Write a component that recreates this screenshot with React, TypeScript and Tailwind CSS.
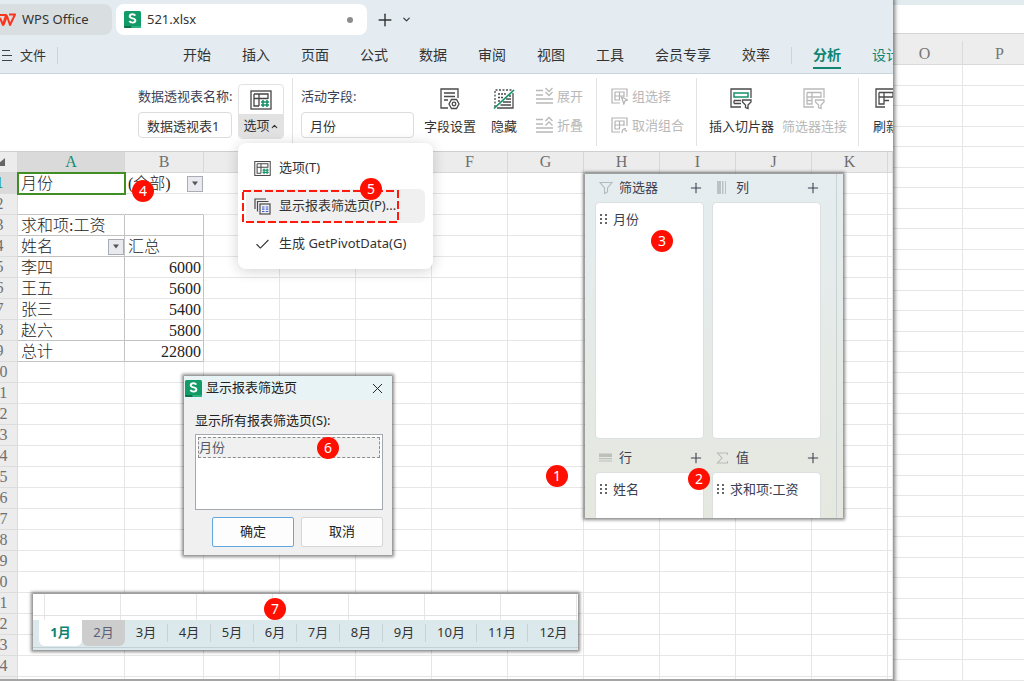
import React from 'react';
import { Plus, ChevronDown, ChevronUp, Check, X } from 'lucide-react';

const MENU_ITEMS = ['开始', '插入', '页面', '公式', '数据', '审阅', '视图', '工具', '会员专享', '效率'];
const COLUMNS = ['A', 'B', 'C', 'D', 'E', 'F', 'G', 'H', 'I', 'J', 'K', 'L'];
const UNLABELLED = ['C', 'D', 'E', 'L'];
const ROWS = Array.from({ length: 25 }, (_, i) => i + 1);
const PIVOT: Record<number, [string, string]> = {
  1: ['月份', '(全部)'],
  3: ['求和项:工资', ''],
  4: ['姓名', '汇总'],
  5: ['李四', '6000'],
  6: ['王五', '5600'],
  7: ['张三', '5400'],
  8: ['赵六', '5800'],
  9: ['总计', '22800'],
};
const MONTHS = Array.from({ length: 12 }, (_, i) => `${i + 1}月`);

function Badge({ n, place }: { n: number; place: string }) {
  return (
    <span className={`absolute z-30 flex size-[22px] items-center justify-center rounded-full bg-[#ff0f00] text-sm text-white ${place}`}>
      {n}
    </span>
  );
}

function WpsMark() {
  return (
    <svg width="16" height="14" viewBox="0 0 16 14" fill="none" stroke="#f9351d" strokeWidth="2" strokeLinejoin="round">
      <path d="M0 2h6l-3 10L0 5" />
      <path d="M3.500 12 7 3l3 9 5-10.500H9" />
    </svg>
  );
}

function SheetMark() {
  return (
    <svg width="17" height="17" viewBox="0 0 17 17" aria-hidden="true">
      <rect width="17" height="17" rx="1.5" fill="#129a67" />
      <path d="M0 15h7.500v2H1.500A1.500 1.500 0 0 1 0 15.500z" fill="#087448" />
      <path d="M7.500 15H17v.5a1.500 1.500 0 0 1-1.500 1.500h-8z" fill="#2fb083" />
      <path d="M11.300 4.700C10.800 3.700 9.900 3.200 8.500 3.200c-1.700 0-2.800.8-2.800 2 0 2.900 5.700 1.400 5.700 4.300 0 1.300-1.200 2.100-2.900 2.100-1.500 0-2.600-.6-3.100-1.700" fill="none" stroke="#fff" strokeWidth="1.900" />
    </svg>
  );
}

function PivotIcon({ size }: { size: number }) {
  return (
    <svg width={size} height={size} viewBox="0 0 22 20" fill="none" stroke="#444" strokeWidth="1.300">
      <rect x="1" y="1" width="20" height="18" />
      <path d="M4 4h14v5M4 4v12h5M4 8.500h14M9 4v12" />
      <path d="M13 10v7M17 10v7M11 12h8M11 15h8" stroke="#159067" strokeWidth="1.500" />
    </svg>
  );
}

function FieldIcon() {
  return (
    <svg width="22" height="24" viewBox="0 0 22 24" fill="none" stroke="#4a4a4a" strokeWidth="1.300">
      <path d="M9 21H2V2h17v9M5 6h11M5 9.500h11M5 13h4" />
      <path d="M12.500 12.500h5l2.500 4.500-2.500 4.500h-5L10 17z" />
      <circle cx="15" cy="17" r="1.800" />
    </svg>
  );
}

function HideIcon() {
  return (
    <svg width="22" height="22" viewBox="0 0 22 22" fill="none" stroke="#4a4a4a" strokeWidth="1.300">
      <path d="M2 19V2h17" strokeDasharray="2 1.500" />
      <path d="M5 6h9M5 9.500h6M5 13h3" strokeDasharray="2 1" />
      <path d="M20 5v15H4M16 8h2M13 11h5M10 14h8M7.500 17H18" />
      <path d="M1 20.500 21 2" stroke="#159067" strokeWidth="1.700" />
    </svg>
  );
}

function ExpandIcon({ up }: { up?: boolean }) {
  return (
    <svg width="18" height="18" viewBox="0 0 18 18" fill="none" stroke="#b9b9b9" strokeWidth="1.300">
      <path d="M1 3.500h7M1 8h7M1 12h17M1 16h17" />
      <path d={up ? 'M10.500 5 14 1.500 17.500 5M10.500 9.500 14 6l3.500 3.500' : 'M10.500 1 14 4.500 17.500 1M10.500 5 14 8.500 17.500 5'} />
    </svg>
  );
}

function GroupIcon({ undo }: { undo?: boolean }) {
  return (
    <svg width="17" height="17" viewBox="0 0 17 17" fill="none" stroke="#b3b3b3" strokeWidth="1.200">
      <path d="M9 15H1V1h15v8M4 4h9v5M4 4v8h5M4 8h9M8.500 4v8" />
      <path d={undo ? 'M11 16c0-3 1-4.500 4-4.500M13.500 12.500l2.500 2' : 'm10.500 9 6 3-2.500 1-1.200 3z'} />
    </svg>
  );
}

function SlicerIcon() {
  return (
    <svg width="23" height="22" viewBox="0 0 23 22" fill="none" stroke="#4a4a4a" strokeWidth="1.300">
      <path d="M11 19H1V1h20v9M4 12.500h7M4 15.500h7M4 12.500v3" />
      <rect x="4" y="5" width="14" height="4" stroke="#159067" strokeWidth="1.500" />
      <path d="M12.500 12h8.500v2l-3 3v3.500l-2.500-1V17l-3-3z" />
    </svg>
  );
}

function FilterLinkIcon() {
  return (
    <svg width="23" height="22" viewBox="0 0 23 22" fill="none" stroke="#b9b9b9" strokeWidth="1.300">
      <path d="M11 19H1V1h20v9M4 4.500h14V9H4M4 4.500V16h5V4.500M4 12.500h5" />
      <path d="M12.500 12h8.500v2l-3 3v3.500l-2.500-1V17l-3-3z" />
    </svg>
  );
}

function RefreshIcon() {
  return (
    <svg width="22" height="22" viewBox="0 0 22 22" fill="none" stroke="#4a4a4a" strokeWidth="1.300">
      <path d="M10 19H1V1h20v9M4 4.500h14V9H4M4 4.500V16h5V4.500M9 12.500h5" />
    </svg>
  );
}

function ReportPagesIcon() {
  return (
    <svg width="17" height="17" viewBox="0 0 17 17" fill="none" stroke="#4a4a4a" strokeWidth="1.200">
      <path d="M1 11V1h11M3.500 13.500v-10h11" />
      <rect x="6" y="6" width="10" height="10" />
      <path d="M8 9h2.500M8 11.200h2.500M8 13.500h2.500M11.800 9h2.500M11.800 11.200h2.500M11.800 13.500h2.500" stroke="#3b5fd0" />
    </svg>
  );
}

function AreaIcon({ kind }: { kind: string }) {
  if (kind === '筛选器')
    return (
      <svg width="14" height="14" viewBox="0 0 14 14" fill="none" stroke="#b5bbbd" strokeWidth="1.100">
        <path d="M1 1.500h12L8.500 7v4L5.500 12.500V7z" />
      </svg>
    );
  if (kind === '列')
    return (
      <svg width="14" height="14" viewBox="0 0 14 14" fill="#bcc1c3">
        <path d="M1 0h4v13H1zM6 0h1.500v13H6zM9 0h1v13H9z" />
      </svg>
    );
  if (kind === '行')
    return (
      <svg width="14" height="14" viewBox="0 0 14 14" fill="#bcbfbc">
        <path d="M0 2.500h13v3.500H0zM0 7h13v1.200H0zM0 9.500h13v1H0z" />
      </svg>
    );
  return (
    <svg width="14" height="14" viewBox="0 0 14 14" fill="none" stroke="#b8bcb8" strokeWidth="1.100">
      <path d="M11.500 4V2H1.500L6 7l-4.500 5h10v-2" />
    </svg>
  );
}

function TallButton({ icon, label, disabled }: { icon: React.ReactNode; label: string; disabled?: boolean }) {
  return (
    <button disabled={disabled} className={`flex shrink-0 flex-col items-center gap-[3px] whitespace-nowrap ${disabled ? 'text-[#b8b8b8]' : 'text-[#333]'}`}>
      <span className="flex h-6 items-center">{icon}</span>
      <span className="leading-6">{label}</span>
    </button>
  );
}

function SmallButton({ icon, label }: { icon: React.ReactNode; label: string }) {
  return (
    <button disabled className="flex items-center gap-1 leading-6 whitespace-nowrap text-[#b8b8b8]">
      {icon}
      {label}
    </button>
  );
}

function Separator() {
  return <div className="h-[68px] w-px shrink-0 bg-[#e3e3e3]" />;
}

function FilterArrow({ label }: { label: string }) {
  return (
    <button aria-label={label} className="flex size-4 shrink-0 items-center justify-center border border-[#a9acb5] bg-[#e9eaf0]">
      <svg width="8" height="5" viewBox="0 0 8 5" fill="#555">
        <path d="M1 .5h6L4 4.500z" />
      </svg>
    </button>
  );
}

function OptionsMenu() {
  return (
    <div className="absolute top-[65px] left-0 z-20 flex w-[195px] flex-col gap-1 rounded-lg bg-white px-2 py-2 text-[#333] shadow-[0_2px_14px_rgba(0,0,0,0.18)]">
      <button className="flex h-[34px] items-center gap-2 px-2">
        <PivotIcon size={17} />
        选项(T)
      </button>
      <button className="relative flex h-[34px] items-center gap-2 rounded-md bg-[#f0f0f0] px-2 whitespace-nowrap">
        <ReportPagesIcon />
        显示报表筛选页(P)...
        <svg className="absolute top-0 -left-1" width="158" height="34" fill="none" stroke="#ff1a0e" strokeWidth="2" strokeDasharray="8 3">
          <rect x="1" y="2" width="155" height="31" />
        </svg>
      </button>
      <button className="flex h-[34px] items-center gap-2 px-2 whitespace-nowrap">
        <Check size={17} strokeWidth={1.5} />
        生成 GetPivotData(G)
      </button>
      <Badge n={5} place="top-[35px] left-[122px]" />
    </div>
  );
}

function Ribbon() {
  return (
    <div className="relative z-20 flex h-[78px] shrink-0 items-start border-b border-[#cfcfcf] bg-white pt-1 pl-[138px]">
      <div className="flex w-[94px] shrink-0 flex-col gap-1 pt-1.5 whitespace-nowrap">
        <label htmlFor="pivot-name" className="leading-6 text-[#3b3f55]">数据透视表名称:</label>
        <input id="pivot-name" defaultValue="数据透视表1" className="h-[26px] w-full rounded border border-[#dcdcdc] px-2 text-[#333]" />
      </div>
      <div className="relative ml-1.5 shrink-0 pt-1.5">
        <button className="flex w-[46px] flex-col rounded border border-[#e2e2e2] bg-white text-[#333]">
          <span className="flex h-[29px] items-center justify-center"><PivotIcon size={22} /></span>
          <span className="flex h-6 items-center justify-center rounded-b bg-[#e2e2e2]">
            选项<ChevronUp size={9} strokeWidth={3} />
          </span>
        </button>
        <OptionsMenu />
      </div>
      <div className="ml-2 flex shrink-0"><Separator /></div>
      <div className="ml-2 flex w-[113px] shrink-0 flex-col gap-1 pt-1.5">
        <label htmlFor="active-field" className="leading-6 text-[#3b3f55]">活动字段:</label>
        <input id="active-field" defaultValue="月份" className="h-[26px] w-full rounded border border-[#dcdcdc] px-2 text-[#333]" />
      </div>
      <div className="ml-2.5 flex shrink-0 gap-[15px] pt-[9px]">
        <TallButton icon={<FieldIcon />} label="字段设置" />
        <TallButton icon={<HideIcon />} label="隐藏" />
      </div>
      <div className="ml-[18px] flex shrink-0 flex-col gap-[5px] pt-1.5">
        <SmallButton icon={<ExpandIcon />} label="展开" />
        <SmallButton icon={<ExpandIcon up />} label="折叠" />
      </div>
      <div className="ml-[13px] flex shrink-0"><Separator /></div>
      <div className="ml-3.5 flex shrink-0 flex-col gap-[5px] pt-1.5">
        <SmallButton icon={<GroupIcon />} label="组选择" />
        <SmallButton icon={<GroupIcon undo />} label="取消组合" />
      </div>
      <div className="ml-3 flex shrink-0"><Separator /></div>
      <div className="ml-3 flex shrink-0 gap-2 pt-[9px]">
        <TallButton icon={<SlicerIcon />} label="插入切片器" />
        <TallButton icon={<FilterLinkIcon />} label="筛选器连接" disabled />
      </div>
      <div className="ml-[11px] flex shrink-0"><Separator /></div>
      <div className="flex min-w-0 flex-1 overflow-hidden pt-[9px] pl-3.5">
        <TallButton icon={<RefreshIcon />} label="刷新" />
      </div>
    </div>
  );
}

function cellBorder(row: number, col: number) {
  const side = col < 2 && row >= 3 && row <= 9 ? 'border-r-[#c3c3c3]' : row <= 2 && col < 2 ? 'border-r-transparent' : 'border-r-[#e6e6e6]';
  const bottom = col < 2 && [2, 3, 4, 8, 9].includes(row) ? 'border-b-[#c3c3c3]' : 'border-b-[#e6e6e6]';
  return `${side} ${bottom}`;
}

function Sheet() {
  return (
    <div className="min-h-0 flex-1 overflow-hidden bg-white">
      <div className="-ml-[18px]">
        <table className="h-[542px] w-full table-fixed border-separate border-spacing-0 font-['Liberation_Serif','Noto_Sans_CJK_SC',serif] text-base leading-5 font-light text-[#222]">
          <colgroup>
            <col className="w-9" />
            <col className="w-[107px]" />
            <col className="w-[79px]" />
            {COLUMNS.slice(2, 11).map((c) => <col key={c} className="w-[76px]" />)}
            <col />
          </colgroup>
          <thead>
            <tr className="bg-[#ececec] text-[#707070]">
              <th className="border-r border-b border-[#d8d8d8] p-0">
                <svg className="mr-3 ml-auto" width="6" height="8" viewBox="0 0 6 8" fill="#666"><path d="M6 0v8H0V5z" /></svg>
              </th>
              {COLUMNS.map((c) => (
                <th key={c} className={`border-r border-b border-[#d8d8d8] p-0 font-normal ${c === 'A' ? 'bg-[#dadada] text-[#138a72]' : ''}`}>
                  {UNLABELLED.includes(c) ? '' : c}
                </th>
              ))}
            </tr>
          </thead>
          <tbody>
            {ROWS.map((r) => (
              <tr key={r}>
                <th className={`border-r border-b border-[#dcdcdc] p-0 font-normal ${r === 1 ? 'bg-[#dadada] text-[#138a72]' : 'bg-[#ececec] text-[#707070]'}`}>{r}</th>
                {COLUMNS.map((c, i) => {
                  const text = i < 2 ? PIVOT[r]?.[i] : undefined;
                  const arrow = (r === 1 && i === 1) || (r === 4 && i === 0);
                  return (
                    <td key={c} className={`border-r border-b p-0 ${cellBorder(r, i)} ${r === 1 && i === 0 ? 'outline-2 -outline-offset-1 outline-[#3f8f24]' : ''}`}>
                      {text && (
                        <div className={`flex h-5 items-center justify-between pt-px pl-[3px] whitespace-nowrap ${arrow ? '' : 'pr-0.5'} ${i === 1 && r >= 5 ? 'flex-row-reverse' : ''}`}>
                          {text}
                          {arrow && <FilterArrow label={`筛选${text}`} />}
                        </div>
                      )}
                    </td>
                  );
                })}
              </tr>
            ))}
          </tbody>
        </table>
      </div>
    </div>
  );
}

function FieldArea({ title, item, tall }: { title: string; item?: string; tall?: boolean }) {
  return (
    <section>
      <header className="flex h-7 items-center pl-1">
        <AreaIcon kind={title} />
        <h3 className="ml-1.5">{title}</h3>
        <button aria-label={`添加${title}`} className="ml-auto"><Plus size={16} strokeWidth={1.600} /></button>
      </header>
      <div className={`rounded border border-[#dbdfdf] bg-white px-1 pt-1.5 ${tall ? 'h-[237px]' : 'h-[60px]'}`}>
        {item && (
          <div className="flex items-center gap-[5px] leading-5">
            <svg width="8" height="12" viewBox="0 0 8 12" fill="#666">
              {[1, 5, 9].map((y) => <path key={y} d={`M0 ${y}h2v2H0zM5 ${y}h2v2H5z`} />)}
            </svg>
            {item}
          </div>
        )}
      </div>
    </section>
  );
}

function FieldPanel() {
  return (
    <aside className="absolute top-[174px] left-[585px] z-10 flex h-[344px] w-[258px] overflow-hidden bg-linear-to-b from-[#e5edf0] to-[#e5e8df] text-[#3b4050] shadow-[0_0_3px_2px_rgba(0,0,0,0.45)]">
      <div className="grid flex-1 grid-cols-[109px_109px] content-start gap-x-2 gap-y-[5px] border-r border-[#cbd2d3] pl-2.5">
        <FieldArea title="筛选器" item="月份" tall />
        <FieldArea title="列" tall />
        <FieldArea title="行" item="姓名" />
        <FieldArea title="值" item="求和项:工资" />
      </div>
      <div className="w-1.5" />
    </aside>
  );
}

function FilterPagesDialog() {
  return (
    <div role="dialog" aria-labelledby="dialog-title" className="absolute top-[376px] left-[184px] z-10 w-[208px] bg-[#f0f0f0] pb-2 text-[#222] shadow-[0_0_3px_2px_rgba(0,0,0,0.45)]">
      <header className="flex h-6 items-center gap-1 bg-[#e8f3f6] pr-1.5 pl-px">
        <SheetMark />
        <h2 id="dialog-title">显示报表筛选页</h2>
        <button aria-label="关闭" className="ml-auto"><X size={17} strokeWidth={1.400} /></button>
      </header>
      <div className="pt-2 pr-[9px] pl-[11px]">
        <p id="page-list" className="leading-6">显示所有报表筛选页(S):</p>
        <ul aria-labelledby="page-list" className="mt-0.5 h-[76px] border border-[#a4a9b0] bg-white p-0.5">
          <li className="h-[21px] border border-dashed border-[#8d8d8d] bg-[#f0f0f0] leading-[18px] text-[#555b66]">月份</li>
        </ul>
        <div className="mt-[7px] flex justify-end gap-[7px]">
          <button className="h-[30px] w-[82px] rounded-xs border border-[#64a7df] bg-[#fdfdfd]">确定</button>
          <button className="h-[30px] w-[82px] rounded-xs border border-[#d6d6d6] bg-[#fdfdfd]">取消</button>
        </div>
      </div>
    </div>
  );
}

function MonthTabs() {
  return (
    <div className="absolute top-[594px] left-[33px] z-10 w-[545px] overflow-hidden bg-white shadow-[0_0_3px_2px_rgba(0,0,0,0.45)]">
      <div className="flex h-[22px] border-b border-[#e2e2e2] pl-[11px]">
        {[0, 1, 2, 3, 4, 5, 6, 7].map((i) => <div key={i} className="w-[76px] shrink-0 border-l border-[#e6e6e6]" />)}
      </div>
      <div className="flex h-1 pl-[11px]">
        {[0, 1, 2, 3, 4, 5, 6, 7].map((i) => <div key={i} className="w-[76px] shrink-0 border-l border-[#e6e6e6]" />)}
      </div>
      <nav className="flex h-7 items-start border-b border-[#c3d0d4] bg-[#dce9ec] pl-1.5">
        {MONTHS.map((m, i) => (
          <button
            key={m}
            className={`flex h-[26px] shrink-0 items-center justify-center ${i > 8 ? 'w-[51px]' : 'w-[43px]'} ${
              i === 0 ? 'rounded-b-md bg-white font-bold text-[#0f8470]' : i === 1 ? 'rounded-b-md bg-[#cdcdcd] text-[#596078]' : 'text-[#333]'
            }`}
          >
            <span className="flex-1">{m}</span>
            {i > 1 && i < 11 && <span className="h-[18px] w-px bg-[#c6d2d6]" />}
          </button>
        ))}
      </nav>
      <div className="h-0.5 bg-[#dce9ec]" />
    </div>
  );
}

function BackgroundSheet() {
  return (
    <div className="flex w-[131px] shrink-0 flex-col overflow-hidden bg-white text-base text-[#777]">
      <div className="h-[5px] shrink-0 bg-[#e2ebee]" />
      <div className="h-[29px] shrink-0 border-b border-[#d2d5d6]" />
      <div className="h-[7px] shrink-0 bg-[#ededed]" />
      <table className="h-[651px] w-full table-fixed border-separate border-spacing-0 font-['Liberation_Serif',serif]">
        <colgroup><col className="w-[70px]" /><col /></colgroup>
        <thead>
          <tr className="h-6 bg-[#ededed]">
            <th className="border-r border-b border-[#dadada] p-0 pt-0.5 pr-1.5 leading-5 font-normal">O</th>
            <th className="border-b border-[#dadada] p-0 pt-0.5 pl-3 leading-5 font-normal">P</th>
          </tr>
        </thead>
        <tbody>
          {Array.from({ length: 30 }, (_, i) => (
            <tr key={i}>
              <td className="border-r border-b border-[#e6e6e6] p-0" />
              <td className="border-b border-[#e6e6e6] p-0" />
            </tr>
          ))}
        </tbody>
      </table>
    </div>
  );
}

export default function App() {
  return (
    <div className="relative flex h-screen overflow-hidden bg-white font-['Noto_Sans','Noto_Sans_CJK_SC',sans-serif] text-[13px]">
      <main className="relative z-10 flex min-w-0 flex-1 flex-col border-b-2 border-[#a5a5a5] bg-[#e4ecf1] shadow-[0_0_4px_2px_rgba(0,0,0,0.5)]">
        <div className="flex h-[39px] shrink-0 items-center gap-1 text-[#333]">
          <div className="flex h-[31px] w-[112px] items-center gap-1.5 rounded-r-lg bg-[#d9dfe1]">
            <WpsMark />
            WPS Office
          </div>
          <div className="flex h-[31px] w-[251px] items-center gap-1.5 rounded-lg bg-white pr-3.5 pl-2">
            <SheetMark />
            521.xlsx
            <span className="ml-auto size-1.5 rounded-full bg-[#8c8c8c]" />
          </div>
          <button aria-label="新建" className="ml-1"><Plus size={20} strokeWidth={1.700} /></button>
          <button aria-label="更多" className="ml-0.5"><ChevronDown size={11} strokeWidth={2.500} /></button>
        </div>
        <nav className="flex h-[35px] shrink-0 items-center overflow-hidden border-b border-[#ccd5d9] pb-0.5 text-sm whitespace-nowrap text-[#333]">
          <button className="ml-0.5 flex items-center gap-2 text-[13px]">
            <svg width="10" height="13" viewBox="0 0 10 13" stroke="#444" strokeWidth="1.200"><path d="M0 1.500h8M0 6.500h10M0 11.500h10" /></svg>
            文件
          </button>
          <div className="ml-[11px] h-[17px] w-px shrink-0 bg-[#ccd4d8]" />
          <div className="ml-[125px] flex shrink-0 gap-[31px]">
            {MENU_ITEMS.map((m) => <button key={m}>{m}</button>)}
          </div>
          <div className="ml-[21px] h-[17px] w-px shrink-0 bg-[#ccd4d8]" />
          <button className="ml-[21px] flex h-full shrink-0 items-center font-bold text-[#0f8470]">
            <span className="border-b-2 border-[#0f8470] pt-0.5 leading-6">分析</span>
          </button>
          <button className="ml-[31px] text-[#0f8470]">设计</button>
        </nav>
        <Ribbon />
        <Sheet />
        <FieldPanel />
        <FilterPagesDialog />
        <MonthTabs />
        <Badge n={1} place="top-[465px] left-[546px]" />
        <Badge n={2} place="top-[468px] left-[688px]" />
        <Badge n={3} place="top-[230px] left-[651px]" />
        <Badge n={4} place="top-[180px] left-[132px]" />
        <Badge n={6} place="top-[437px] left-[317px]" />
        <Badge n={7} place="top-[598px] left-[264px]" />
      </main>
      <BackgroundSheet />
    </div>
  );
}
